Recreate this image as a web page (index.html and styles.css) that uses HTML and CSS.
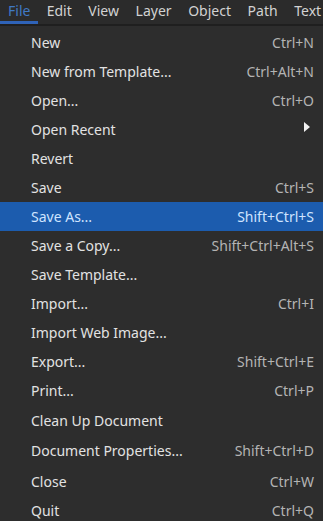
FILE: index.html
```html
<!DOCTYPE html>
<html lang="en">
<head>
    <meta charset="UTF-8">
    <title>File menu</title>
    <link rel="stylesheet" href="styles.css">
</head>
<body>
    <div class="menubar">
        <div class="bar-item active">File</div>
        <div class="bar-item">Edit</div>
        <div class="bar-item">View</div>
        <div class="bar-item">Layer</div>
        <div class="bar-item">Object</div>
        <div class="bar-item">Path</div>
        <div class="bar-item">Text</div>
    </div>

    <div class="menu">
        <div class="row"><span class="label">New</span><span class="key">Ctrl+N</span></div>
        <div class="row"><span class="label">New from Template...</span><span class="key">Ctrl+Alt+N</span></div>
        <div class="row"><span class="label">Open...</span><span class="key">Ctrl+O</span></div>
        <div class="row"><span class="label">Open Recent</span>
            <svg class="arrow" width="6" height="10" viewBox="0 0 6 10"><path d="M0 0 L6 5 L0 10 Z" fill="#f2f2f2"/></svg>
        </div>
        <div class="row"><span class="label">Revert</span></div>
        <div class="row"><span class="label">Save</span><span class="key">Ctrl+S</span></div>
        <div class="row selected"><span class="label">Save As...</span><span class="key">Shift+Ctrl+S</span></div>
        <div class="row"><span class="label">Save a Copy...</span><span class="key">Shift+Ctrl+Alt+S</span></div>
        <div class="row"><span class="label">Save Template...</span></div>
        <div class="row"><span class="label">Import...</span><span class="key">Ctrl+I</span></div>
        <div class="row"><span class="label">Import Web Image...</span></div>
        <div class="row"><span class="label">Export...</span><span class="key">Shift+Ctrl+E</span></div>
        <div class="row"><span class="label">Print...</span><span class="key">Ctrl+P</span></div>
        <div class="sep"></div>
        <div class="row"><span class="label">Clean Up Document</span></div>
        <div class="sep"></div>
        <div class="row"><span class="label">Document Properties...</span><span class="key">Shift+Ctrl+D</span></div>
        <div class="sep wide"></div>
        <div class="row"><span class="label">Close</span><span class="key">Ctrl+W</span></div>
        <div class="row"><span class="label">Quit</span><span class="key">Ctrl+Q</span></div>
    </div>
</body>
</html>
```

FILE: styles.css
```css
* {
    margin: 0;
    padding: 0;
    box-sizing: border-box;
}

body {
    font-family: 'Noto Sans', sans-serif;
    font-size: 14px;
    background: #2b2b2b;
    color: #e2e2e2;
    width: 323px;
    height: 521px;
    overflow: hidden;
}

.menubar {
    display: flex;
    height: 26px;
    background: #2b2b2b;
    border-bottom: 2px solid #1f1f1f;
}

.bar-item {
    padding: 0 8.3px;
    height: 24px;
    line-height: 22px;
    color: #d2d2d2;
    border-bottom: 3px solid transparent;
}

.bar-item.active {
    padding: 0 8px;
    color: #4079c4;
    border-bottom-color: #2f63b8;
    width: 40px;
}

.menu {
    padding-top: 2px;
    background: #2d2d2d;
}

.row {
    display: flex;
    align-items: center;
    justify-content: space-between;
    height: 29px;
    padding: 0 9px 0 31px;
}

.row .key {
    color: #b4b4b4;
}

.row.selected {
    background: #1c5cae;
    color: #cfe4ff;
}

.row.selected .key {
    color: #cfe4ff;
}

.arrow {
    margin-right: 4px;
    margin-top: -5px;
}

.sep {
    height: 1px;
}

.sep.wide {
    height: 2px;
}
```
